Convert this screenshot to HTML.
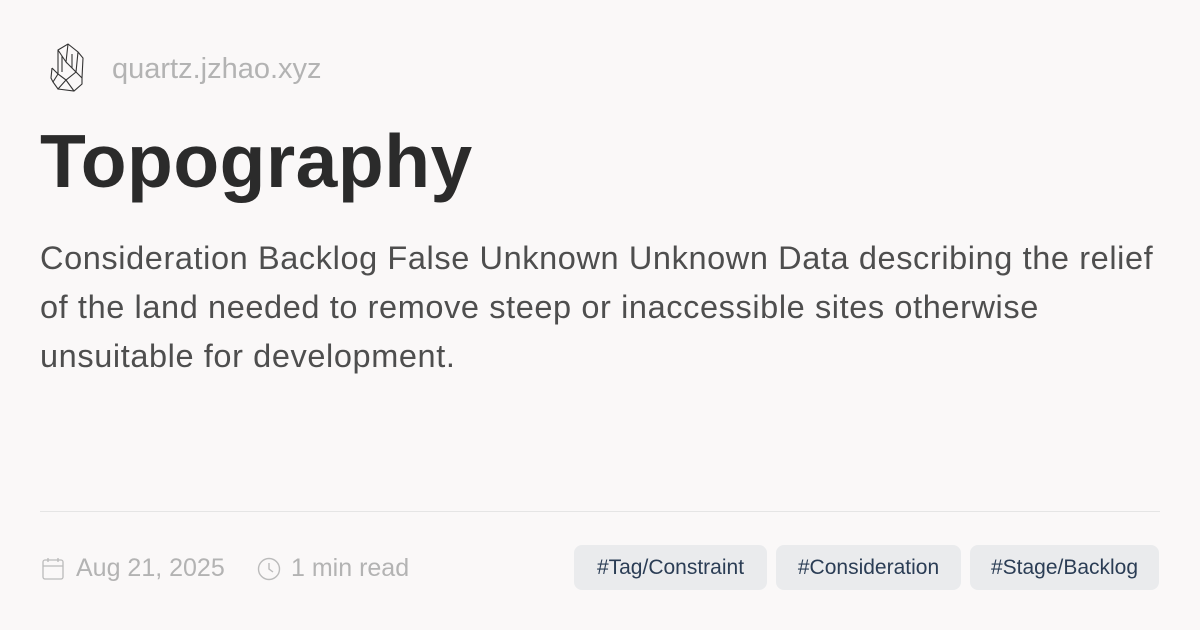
<!DOCTYPE html>
<html><head><style>
body{margin:0;width:1200px;height:630px;background:#faf8f8;font-family:"Liberation Sans",sans-serif;position:relative;overflow:hidden}
.site{position:absolute;left:112px;top:53px;font-size:29px;color:#b3b3b3}
h1{position:absolute;left:40px;top:118px;margin:0;font-size:75px;font-weight:bold;color:#2b2b2b;letter-spacing:0.5px}
.desc{position:absolute;left:40px;top:234px;width:1160px;white-space:nowrap;font-size:32.5px;line-height:49px;color:#4e4e4e;letter-spacing:0.6px}
.hr{position:absolute;left:40px;right:40px;top:511px;border-top:1px solid #e5e5e5}
.meta{position:absolute;top:554px;font-size:25px;color:#b3b3b3}
.tag{position:absolute;top:545px;height:45px;line-height:45px;background:#eaebed;border-radius:8px;color:#2b3d55;font-size:21px;text-align:center}
</style></head><body>
<svg style="position:absolute;left:47px;top:42px" width="42" height="52" viewBox="0 0 40 52" fill="none" stroke="#333" stroke-width="1.1">
<path d="M10 8 L20 2 L30 10 L28 30 L18 38 L10 32 Z M20 2 L18 20 L10 8 M18 20 L28 30 M30 10 L35 16 L34 36 L28 30 M10 32 L5 40 L10 47 L18 38 M4 26 L10 32 M4 26 L3 36 L5 40 M10 47 L26 49 L34 42 L34 36 M18 38 L26 49 M14 14 L14 30 M24 12 L24 26"/>
</svg>
<div class="site">quartz.jzhao.xyz</div>
<h1>Topography</h1>
<div class="desc">Consideration Backlog False Unknown Unknown Data describing the relief<br>of the land needed to remove steep or inaccessible sites otherwise<br>unsuitable for development.</div>
<div class="hr"></div>
<svg style="position:absolute;left:42px;top:557px" width="22" height="24" viewBox="0 0 22 24" fill="none" stroke="#bbb" stroke-width="1.3"><rect x="1" y="3" width="20" height="19" rx="2"/><path d="M1 9 H21 M6 1 V5 M16 1 V5"/></svg>
<div class="meta" style="left:76px">Aug 21, 2025</div>
<svg style="position:absolute;left:257px;top:557px" width="24" height="24" viewBox="0 0 24 24" fill="none" stroke="#bbb" stroke-width="1.4"><circle cx="12" cy="12" r="10.5"/><path d="M12 6 V12 L16 15"/></svg>
<div class="meta" style="left:291px">1 min read</div>
<div class="tag" style="left:574px;width:193px">#Tag/Constraint</div>
<div class="tag" style="left:776px;width:185px">#Consideration</div>
<div class="tag" style="left:970px;width:189px">#Stage/Backlog</div>
</body></html>
